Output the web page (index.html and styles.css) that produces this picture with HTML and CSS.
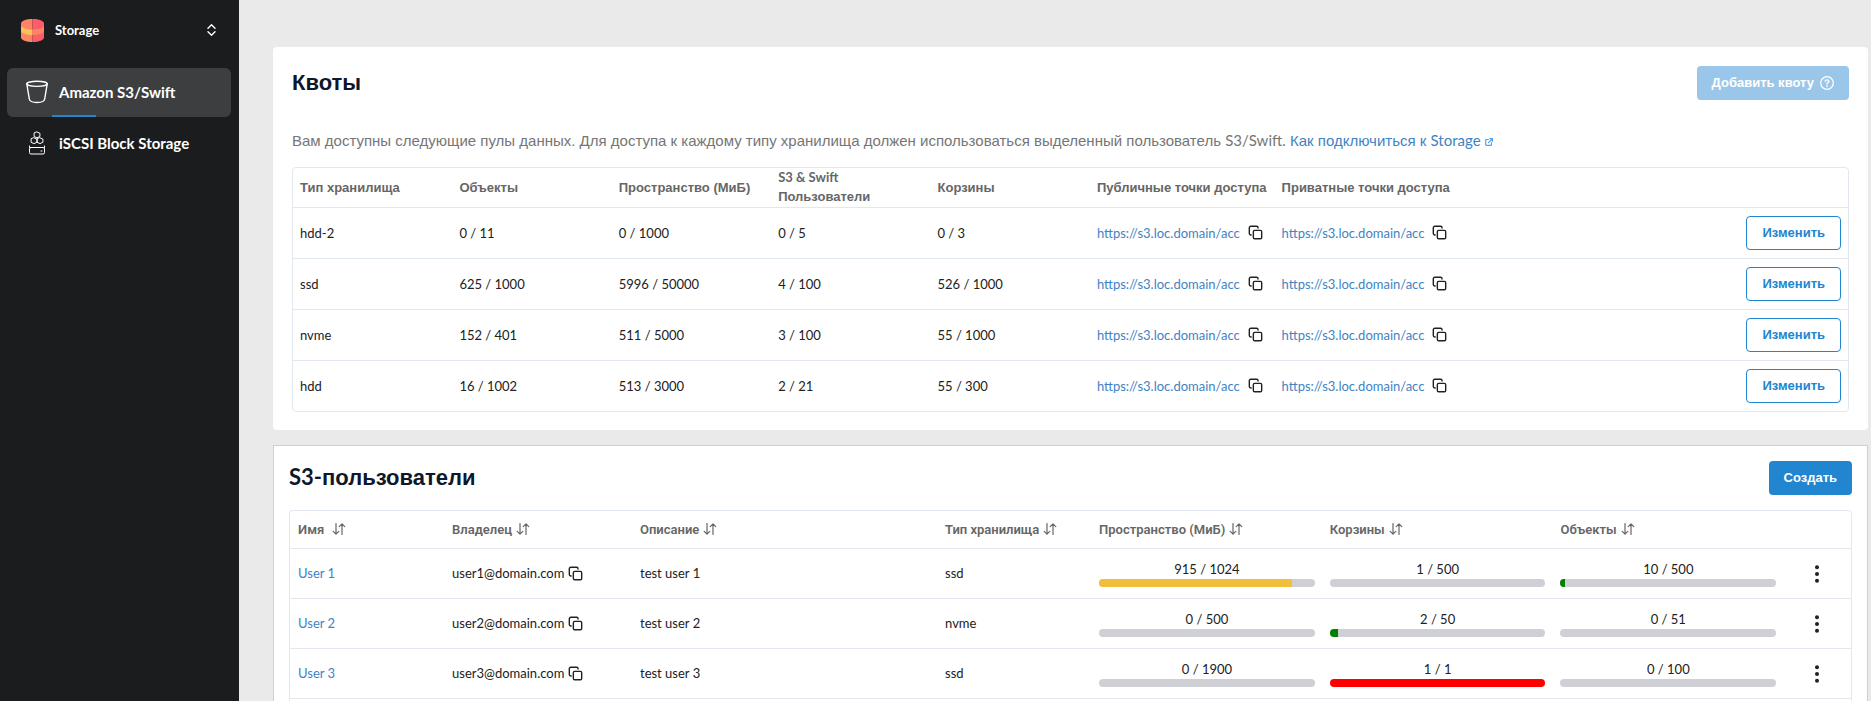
FILE: index.html
```html
<!DOCTYPE html>
<html lang="ru">
<head>
<meta charset="utf-8">
<title>Storage</title>
<link rel="stylesheet" href="styles.css">
</head>
<body>
<svg class="sprite" aria-hidden="true">
  <symbol id="copy" viewBox="0 0 16 16"><rect x="5.7" y="5.7" width="8.9" height="8.9" rx="1.4"/><path d="M3.4 10.6h-.5a1.5 1.5 0 0 1-1.5-1.5V2.8a1.5 1.5 0 0 1 1.5-1.5h6.3a1.5 1.5 0 0 1 1.5 1.5v.5"/></symbol>
  <symbol id="sort" viewBox="0 0 14 12"><path d="M4 .5v10.7M1.2 8.4 4 11.2l2.8-2.8M10 11.5V.8M7.2 3.6 10 .8l2.8 2.8"/></symbol>
  <symbol id="dots" viewBox="0 0 4 18"><circle cx="2" cy="2.2" r="2"/><circle cx="2" cy="9" r="2"/><circle cx="2" cy="15.8" r="2"/></symbol>
</svg>
<div class="app">
  <aside class="sidebar">
    <button class="switcher" type="button">
      <svg class="logo" viewBox="0 0 23 23" aria-hidden="true">
        <path d="M0 4.5C0 2 5 0 11.5 0v23C5 23 0 21 0 18.500z" fill="#ff8364"/>
        <path d="M23 4.500C23 2 18 0 11.500 0v23C18 23 23 21 23 18.500z" fill="#ff5c69"/>
        <path d="M0 7C1.500 9 6 10.500 11.500 10.500V16C5.500 16 1.500 14.500 0 12.500z" fill="#fdbf57"/>
        <path d="M23 7C21.500 9 17 10.500 11.500 10.500V16C17.500 16 21.500 14.500 23 12.500z" fill="#ff8364"/>
      </svg>
      <span>Storage</span>
      <svg class="chevrons" viewBox="0 0 9 12" aria-hidden="true"><path d="M1 4.200 4.500 .8 8 4.200M1 7.800l3.500 3.400L8 7.800"/></svg>
    </button>
    <nav>
      <a class="nav-item active" href="#s3">
        <svg class="nav-icon" viewBox="0 0 24 24" aria-hidden="true"><ellipse cx="12" cy="3.800" rx="10.200" ry="2.600"/><path d="M1.800 3.800 4.300 19c.3 2 3.500 3.500 7.700 3.500s7.400-1.500 7.700-3.500l2.500-15.200"/></svg>
        <span>Amazon S3/Swift</span>
      </a>
      <a class="nav-item" href="#iscsi">
        <svg class="nav-icon thin" viewBox="0 0 24 24" aria-hidden="true"><path d="m12 1 2.900 1.300v3.200L12 6.800 9.100 5.500V2.300zM9 6.800l2.900 1.300v3.200L9 12.600l-2.900-1.300V8.100zM15 6.800l2.900 1.300v3.200L15 12.600l-2.900-1.300V8.100z"/><path d="M4.500 15v1.500M19.500 15v1.500"/><rect x="4.500" y="16.500" width="15" height="6.500" rx="1.500"/><path d="M16 20h1"/></svg>
        <span>iSCSI Block Storage</span>
      </a>
    </nav>
  </aside>
  <main class="content">
    <section class="card quotas">
      <header class="card-head">
        <h1>Квоты</h1>
        <button class="btn btn-primary" type="button" disabled>Добавить квоту<svg class="help" viewBox="0 0 14 14" aria-hidden="true"><circle cx="7" cy="7" r="6.300"/><path d="M5.200 5.600c0-1 .8-1.800 1.800-1.800s1.800.7 1.800 1.600c0 1.200-1.800 1.300-1.800 2.600M7 9.600v1"/></svg></button>
      </header>
      <p class="intro">Вам доступны следующие пулы данных. Для доступа к каждому типу хранилища должен использоваться выделенный пользователь <span class="latin">S3/Swift.</span> <a href="#help">Как подключиться к <span class="latin">Storage</span><svg class="ext" viewBox="0 0 8 8" aria-hidden="true"><path d="M3.200 1.500H1.600a.9.900 0 0 0-.9.900v4a.9.900 0 0 0 .9.900h4a.9.900 0 0 0 .9-.9V4.800M4.800.6h2.600v2.600M7.200.8 3.400 4.600"/></svg></a></p>
      <div class="frame">
        <table class="quota-table">
          <colgroup><col class="q-num"><col class="q-num"><col class="q-num"><col class="q-num"><col class="q-num"><col class="q-url"><col><col class="q-act"></colgroup>
          <thead>
            <tr><th>Тип хранилища</th><th>Объекты</th><th>Пространство (МиБ)</th><th><span class="latin">S3 &amp; Swift</span> Пользователи</th><th>Корзины</th><th>Публичные точки доступа</th><th>Приватные точки доступа</th><th></th></tr>
          </thead>
          <tbody>
            <tr><td>hdd-2</td><td>0 / 11</td><td>0 / 1000</td><td>0 / 5</td><td>0 / 3</td><td><span class="url"><a href="#acc">https://s3.loc.domain/acc</a><button class="icon-btn" type="button" aria-label="Копировать"><svg class="copy"><use href="#copy"/></svg></button></span></td><td><span class="url"><a href="#acc">https://s3.loc.domain/acc</a><button class="icon-btn" type="button" aria-label="Копировать"><svg class="copy"><use href="#copy"/></svg></button></span></td><td><button class="btn btn-outline" type="button">Изменить</button></td></tr>
            <tr><td>ssd</td><td>625 / 1000</td><td>5996 / 50000</td><td>4 / 100</td><td>526 / 1000</td><td><span class="url"><a href="#acc">https://s3.loc.domain/acc</a><button class="icon-btn" type="button" aria-label="Копировать"><svg class="copy"><use href="#copy"/></svg></button></span></td><td><span class="url"><a href="#acc">https://s3.loc.domain/acc</a><button class="icon-btn" type="button" aria-label="Копировать"><svg class="copy"><use href="#copy"/></svg></button></span></td><td><button class="btn btn-outline" type="button">Изменить</button></td></tr>
            <tr><td>nvme</td><td>152 / 401</td><td>511 / 5000</td><td>3 / 100</td><td>55 / 1000</td><td><span class="url"><a href="#acc">https://s3.loc.domain/acc</a><button class="icon-btn" type="button" aria-label="Копировать"><svg class="copy"><use href="#copy"/></svg></button></span></td><td><span class="url"><a href="#acc">https://s3.loc.domain/acc</a><button class="icon-btn" type="button" aria-label="Копировать"><svg class="copy"><use href="#copy"/></svg></button></span></td><td><button class="btn btn-outline" type="button">Изменить</button></td></tr>
            <tr><td>hdd</td><td>16 / 1002</td><td>513 / 3000</td><td>2 / 21</td><td>55 / 300</td><td><span class="url"><a href="#acc">https://s3.loc.domain/acc</a><button class="icon-btn" type="button" aria-label="Копировать"><svg class="copy"><use href="#copy"/></svg></button></span></td><td><span class="url"><a href="#acc">https://s3.loc.domain/acc</a><button class="icon-btn" type="button" aria-label="Копировать"><svg class="copy"><use href="#copy"/></svg></button></span></td><td><button class="btn btn-outline" type="button">Изменить</button></td></tr>
          </tbody>
        </table>
      </div>
    </section>
    <section class="card users">
      <header class="card-head">
        <h2><span class="latin">S3-</span>пользователи</h2>
        <button class="btn btn-primary" type="button">Создать</button>
      </header>
      <div class="frame">
        <table class="user-table">
          <colgroup><col class="u-name"><col class="u-owner"><col class="u-desc"><col class="u-type"><col class="u-bar"><col class="u-bar"><col class="u-bar"><col></colgroup>
          <thead>
            <tr><th><span class="sortable wide">Имя<svg class="sort"><use href="#sort"/></svg></span></th><th><span class="sortable">Владелец<svg class="sort"><use href="#sort"/></svg></span></th><th><span class="sortable">Описание<svg class="sort"><use href="#sort"/></svg></span></th><th><span class="sortable">Тип хранилища<svg class="sort"><use href="#sort"/></svg></span></th><th><span class="sortable">Пространство (МиБ)<svg class="sort"><use href="#sort"/></svg></span></th><th><span class="sortable">Корзины<svg class="sort"><use href="#sort"/></svg></span></th><th><span class="sortable">Объекты<svg class="sort"><use href="#sort"/></svg></span></th><th></th></tr>
          </thead>
          <tbody>
            <tr><td><a href="#u1">User 1</a></td><td><span class="owner">user1@domain.com<button class="icon-btn" type="button" aria-label="Копировать"><svg class="copy"><use href="#copy"/></svg></button></span></td><td>test user 1</td><td>ssd</td>
              <td><div class="usage">915 / 1024<div class="bar"><div class="fill amber" style="width:89.400%"></div></div></div></td><td><div class="usage">1 / 500<div class="bar"></div></div></td><td><div class="usage">10 / 500<div class="bar"><div class="fill green" style="width:2%"></div></div></div></td><td class="menu"><button class="icon-btn" type="button" aria-label="Меню"><svg class="dots"><use href="#dots"/></svg></button></td></tr>
            <tr><td><a href="#u2">User 2</a></td><td><span class="owner">user2@domain.com<button class="icon-btn" type="button" aria-label="Копировать"><svg class="copy"><use href="#copy"/></svg></button></span></td><td>test user 2</td><td>nvme</td>
              <td><div class="usage">0 / 500<div class="bar"></div></div></td><td><div class="usage">2 / 50<div class="bar"><div class="fill green" style="width:4%"></div></div></div></td><td><div class="usage">0 / 51<div class="bar"></div></div></td><td class="menu"><button class="icon-btn" type="button" aria-label="Меню"><svg class="dots"><use href="#dots"/></svg></button></td></tr>
            <tr><td><a href="#u3">User 3</a></td><td><span class="owner">user3@domain.com<button class="icon-btn" type="button" aria-label="Копировать"><svg class="copy"><use href="#copy"/></svg></button></span></td><td>test user 3</td><td>ssd</td>
              <td><div class="usage">0 / 1900<div class="bar"></div></div></td><td><div class="usage">1 / 1<div class="bar"><div class="fill red" style="width:100%"></div></div></div></td><td><div class="usage">0 / 100<div class="bar"></div></div></td><td class="menu"><button class="icon-btn" type="button" aria-label="Меню"><svg class="dots"><use href="#dots"/></svg></button></td></tr>
          </tbody>
        </table>
      </div>
    </section>
  </main>
</div>
</body>
</html>
```
FILE: styles.css
```css
* { box-sizing: border-box; }
body {
  margin: 0;
  height: 100vh;
  overflow: hidden;
  background: #eaeaea;
  color: #212121;
  font: 13px/20px Lato, "Liberation Sans", sans-serif;
}
button { font: inherit; cursor: pointer; }
button:disabled { cursor: default; }
a { color: #4183c4; text-decoration: none; }
svg { flex: none; fill: none; stroke: currentColor; stroke-linecap: round; stroke-linejoin: round; }
.sprite { position: absolute; width: 0; height: 0; }
h1, h2, th, .btn, .intro { font-family: "Liberation Sans", sans-serif; }
.latin { font-family: Lato, sans-serif; line-height: 1; }

.app { display: flex; height: 100%; }
.sidebar { flex: none; width: 239px; padding: 0 8px 0 7px; background: #1b1c1e; color: #fff; }
.switcher {
  display: flex; align-items: center; gap: 11px;
  width: 100%; height: 60px; padding: 0 15px 0 14px;
  border: 0; background: none; color: #fff;
  font-size: 13px; font-weight: 700;
}
.logo { width: 23px; height: 23px; stroke: none; }
.chevrons { width: 9px; height: 12px; margin-left: auto; stroke-width: 1.4; }
nav { display: flex; flex-direction: column; gap: 2px; margin-top: 8px; }
.nav-item {
  position: relative; display: flex; align-items: center; gap: 10px;
  height: 49px; padding: 0 18px 2px; border-radius: 6px;
  color: #fff; font-size: 15px; font-weight: 700;
}
.nav-item.active { background: #3d3e40; }
.nav-item.active::after {
  content: ""; position: absolute; left: 45px; bottom: 0;
  width: 44px; height: 2px; background: #2185d0;
}
.nav-icon { width: 24px; height: 24px; stroke-width: 1.4; }
.nav-icon.thin { stroke-width: 1; }

.content { flex: 1; min-width: 0; display: flex; flex-direction: column; gap: 15px; padding: 47px 3px 0 34px; }
.card { background: #fff; }
.quotas { padding: 19px 19px 18px; border-radius: 4px; }
.users { flex: 1; min-height: 0; display: flex; flex-direction: column; padding: 15px 15px 0; border: 1px solid #d0d0d0; border-bottom: 0; }
.card-head { display: flex; align-items: center; justify-content: space-between; height: 34px; }
h1, h2 { margin: 0; color: #0f172a; font-size: 22px; line-height: 34px; font-weight: 700; }

.btn {
  display: inline-flex; align-items: center; height: 34px; padding: 0 14px;
  border: 1px solid transparent; border-radius: 4px;
  font-size: 13px; font-weight: 700; white-space: nowrap;
}
.btn-primary { background: #2185d0; color: #fff; }
.btn-primary:disabled { opacity: .45; }
.btn-outline { border-color: #2185d0; background: #fff; color: #2185d0; padding: 0 15px; }
.help { width: 14px; height: 14px; margin-left: 6px; stroke-width: 1.3; }
.icon-btn { display: inline-flex; padding: 0; border: 0; background: none; color: #212121; vertical-align: middle; }

.intro { margin: 31px 0 16px; color: #767676; font-size: 15px; line-height: 20px; }
.ext { width: 8px; height: 8px; margin-left: 4px; color: #4aa3f5; stroke-width: 1.2; }

.frame { border: 1px solid #e2e8f0; border-radius: 4px; }
.users .frame { flex: 1; min-height: 0; margin-top: 15px; border-bottom: 0; border-radius: 4px 4px 0 0; }
table { width: 100%; table-layout: fixed; border-collapse: collapse; }
th, td { padding: 0 7px; border-bottom: 1px solid #e2e8f0; text-align: left; vertical-align: middle; white-space: nowrap; }
th { color: #666; font-size: 13px; line-height: 19px; font-weight: 700; }
.quota-table th { height: 39px; white-space: normal; }
.quota-table td { height: 51px; }
.quota-table tr:last-child td { border-bottom: 0; }
.quota-table td:last-child { text-align: right; }
.quota-table .btn { vertical-align: middle; }
.q-num { width: 10.25%; }
.q-url { width: 11.88%; }
.q-act { width: 8%; }
.url { display: flex; align-items: center; gap: 8px; }
.owner { display: flex; align-items: center; gap: 4px; }
.copy { width: 15px; height: 15px; stroke-width: 1.5; }

.user-table th, .user-table td { padding-left: 8px; }
.user-table th { height: 37px; font-family: Roboto, sans-serif; font-weight: 600; }
.user-table td { height: 50px; }
.sortable { display: flex; align-items: center; gap: 4px; }
.sortable.wide { gap: 8px; }
.sort { width: 14px; height: 12px; stroke-width: 1.2; }
.u-name, .u-type { width: 9.87%; }
.u-owner { width: 12.04%; }
.u-desc { width: 19.54%; }
.u-bar { width: 14.78%; }
.usage { text-align: center; line-height: 20px; }
.bar { height: 8px; border-radius: 4px; background: #cfd0d5; overflow: hidden; }
.fill { height: 100%; }
.amber { background: #f2bf3a; }
.green { background: #008000; }
.red { background: #f00; }
.user-table .menu { padding: 0 7px; text-align: center; }
.dots { width: 4px; height: 18px; fill: currentColor; stroke: none; }
```
